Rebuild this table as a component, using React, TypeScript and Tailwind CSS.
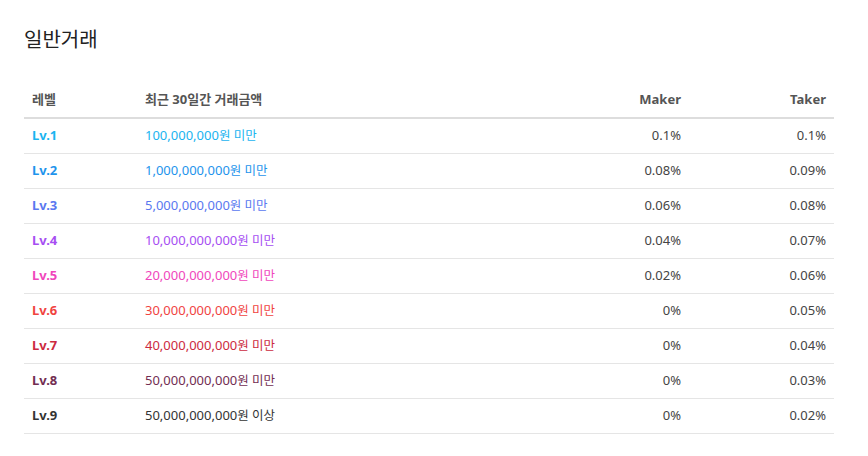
import React from "react";

const rows = [
  { lv: "Lv.1", amt: "100,000,000", suf: "원 미만", maker: "0.1%", taker: "0.1%", c: "text-[#1ab4f0]" },
  { lv: "Lv.2", amt: "1,000,000,000", suf: "원 미만", maker: "0.08%", taker: "0.09%", c: "text-[#1e94ec]" },
  { lv: "Lv.3", amt: "5,000,000,000", suf: "원 미만", maker: "0.06%", taker: "0.08%", c: "text-[#5a78f0]" },
  { lv: "Lv.4", amt: "10,000,000,000", suf: "원 미만", maker: "0.04%", taker: "0.07%", c: "text-[#a64ef2]" },
  { lv: "Lv.5", amt: "20,000,000,000", suf: "원 미만", maker: "0.02%", taker: "0.06%", c: "text-[#f046bc]" },
  { lv: "Lv.6", amt: "30,000,000,000", suf: "원 미만", maker: "0%", taker: "0.05%", c: "text-[#f0433f]" },
  { lv: "Lv.7", amt: "40,000,000,000", suf: "원 미만", maker: "0%", taker: "0.04%", c: "text-[#cc2a40]" },
  { lv: "Lv.8", amt: "50,000,000,000", suf: "원 미만", maker: "0%", taker: "0.03%", c: "text-[#722d52]" },
  { lv: "Lv.9", amt: "50,000,000,000", suf: "원 이상", maker: "0%", taker: "0.02%", c: "text-[#333333]" },
];

export default function App() {
  return (
    <div
      className="w-[868px] h-[456px] bg-white px-6 pt-[26px]"
      style={{ fontFamily: '"Noto Sans", "Noto Sans CJK KR", sans-serif' }}
    >
      <h1 className="text-[20px] leading-[28px] text-[#222] font-normal">일반거래</h1>
      <div className="mt-[28px] w-[810px]">
        <div className="grid grid-cols-[113px_1fr_145px_145px] h-[37px] items-center border-b-2 border-[#dddddd] text-[13px] font-bold text-[#555]">
          <div className="pl-2">레벨</div>
          <div className="pl-2">최근 30일간 거래금액</div>
          <div className="pr-2 text-right">Maker</div>
          <div className="pr-2 text-right">Taker</div>
        </div>
        {rows.map((r) => (
          <div
            key={r.lv}
            className="grid grid-cols-[113px_1fr_145px_145px] h-[35px] items-center border-b border-[#e5e5e5] text-[13px]"
          >
            <div className={`pl-2 font-bold ${r.c}`}>{r.lv}</div>
            <div className={`pl-2 ${r.c}`}>
              {r.amt}
              <span className="text-[12.5px]">{r.suf}</span>
            </div>
            <div className="pr-2 text-right text-[#444]">{r.maker}</div>
            <div className="pr-2 text-right text-[#444]">{r.taker}</div>
          </div>
        ))}
      </div>
    </div>
  );
}
